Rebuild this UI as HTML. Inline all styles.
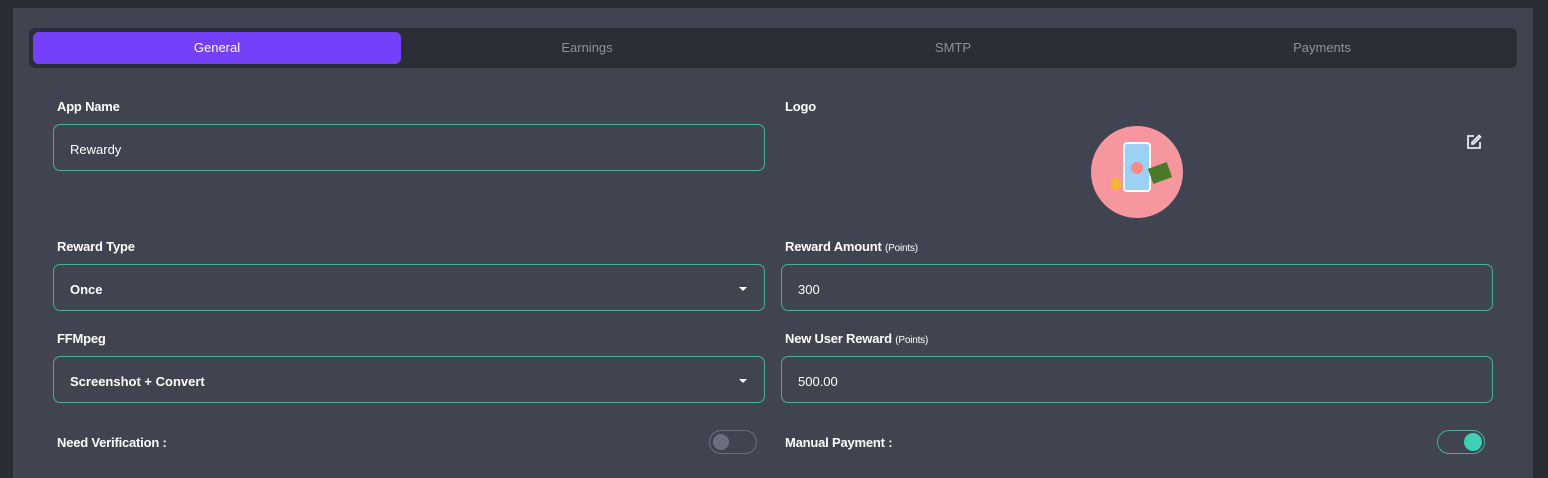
<!DOCTYPE html>
<html><head><style>
*{box-sizing:border-box;margin:0;padding:0}
body{width:1548px;height:478px;background:#2a2d35;font-family:"Liberation Sans",sans-serif;color:#fff;position:relative;overflow:hidden}
.panel{position:absolute;left:13px;top:8px;width:1520px;height:470px;background:#3f4450}
.tabs{position:absolute;left:29px;top:28px;width:1488px;height:40px;background:#2b2e37;border-radius:6px}
.tab{position:absolute;top:0;height:40px;line-height:40px;text-align:center;font-size:13px;color:#8e929c}
.act{position:absolute;left:33px;top:32px;width:368px;height:32px;background:#7540f9;border-radius:6px;text-align:center;line-height:32px;font-size:13px;color:#fff}
.lbl{position:absolute;font-size:13px;font-weight:bold;color:#fff;letter-spacing:-0.2px}
.lbl small{font-size:10px;font-weight:normal}
.in{position:absolute;height:47px;border:1px solid #4aae98;border-radius:7px;font-size:13px;line-height:49px;padding-left:16px;color:#fff}
.sel{font-weight:bold}
.arr{position:absolute;right:17px;top:22px;width:0;height:0;border-left:4px solid transparent;border-right:4px solid transparent;border-top:4px solid #fff}
.tog{position:absolute;width:48px;height:24px;border-radius:12px;border:1px solid #6b7080}
.knob{position:absolute;top:3px;width:16px;height:16px;border-radius:50%}
</style></head><body>
<div class="panel"></div>
<div class="tabs">
<div class="tab" style="left:372px;width:372px">Earnings</div>
<div class="tab" style="left:744px;width:360px">SMTP</div>
<div class="tab" style="left:1104px;width:378px">Payments</div>
</div>
<div class="act">General</div>

<div class="lbl" style="left:57px;top:99px">App Name</div>
<div class="in" style="left:53px;top:124px;width:712px">Rewardy</div>
<div class="lbl" style="left:785px;top:99px">Logo</div>
<div style="position:absolute;left:1091px;top:126px;width:92px;height:92px;border-radius:50%;background:#f6979f"></div>
<div style="position:absolute;left:1123px;top:142px;width:28px;height:50px;border-radius:4px;background:#9bd1f2;border:2px solid #fff"></div>
<div style="position:absolute;left:1131px;top:162px;width:12px;height:12px;border-radius:50%;background:#f88"></div>
<div style="position:absolute;left:1150px;top:165px;width:20px;height:16px;background:#4b7a2a;transform:rotate(-20deg)"></div>
<div style="position:absolute;left:1111px;top:178px;width:10px;height:12px;border-radius:50%;background:#f5b82e"></div>
<svg style="position:absolute;left:1466px;top:134px" width="16" height="16" viewBox="0 0 16 16" fill="none" stroke="#e8eaf0" stroke-width="1.8"><path d="M8 2H2v12h12V8"/><path d="M13 1.5l1.5 1.5-7 7H6V8.5z"/></svg>

<div class="lbl" style="left:57px;top:239px">Reward Type</div>
<div class="in sel" style="left:53px;top:264px;width:712px">Once<span class="arr"></span></div>
<div class="lbl" style="left:785px;top:239px">Reward Amount <small>(Points)</small></div>
<div class="in" style="left:781px;top:264px;width:712px">300</div>

<div class="lbl" style="left:57px;top:331px">FFMpeg</div>
<div class="in sel" style="left:53px;top:356px;width:712px">Screenshot + Convert<span class="arr"></span></div>
<div class="lbl" style="left:785px;top:331px">New User Reward <small>(Points)</small></div>
<div class="in" style="left:781px;top:356px;width:712px">500.00</div>

<div class="lbl" style="left:57px;top:435px">Need Verification :</div>
<div class="tog" style="left:709px;top:430px"><div class="knob" style="left:3px;background:#6b7080"></div></div>
<div class="lbl" style="left:785px;top:435px">Manual Payment :</div>
<div class="tog" style="left:1437px;top:430px;border-color:#4aae98"><div class="knob" style="left:26px;background:#3ecfb4;width:18px;height:18px;top:2px"></div></div>
</body></html>
